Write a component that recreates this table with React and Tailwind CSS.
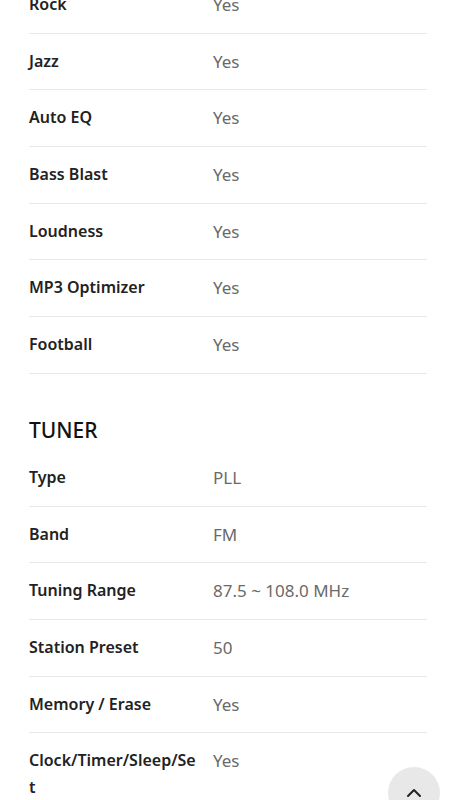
import { ChevronUp } from 'lucide-react'

const audio = [
  ['Rock', 'Yes'],
  ['Jazz', 'Yes'],
  ['Auto EQ', 'Yes'],
  ['Bass Blast', 'Yes'],
  ['Loudness', 'Yes'],
  ['MP3 Optimizer', 'Yes'],
  ['Football', 'Yes'],
]

const tuner = [
  ['Type', 'PLL'],
  ['Band', 'FM'],
  ['Tuning Range', '87.5 ~ 108.0 MHz'],
  ['Station Preset', '50'],
  ['Memory / Erase', 'Yes'],
  ['Clock/Timer/Sleep/Set', 'Yes'],
]

function Row({ label, value }) {
  return (
    <div className="flex border-b border-[#e8e8e8] pt-[14px] pb-[14.7px]">
      <div className="w-[184px] shrink-0 break-all pr-[14px] text-[16px] font-semibold leading-[27px] text-[#222]">{label}</div>
      <div className="flex-1 text-[17px] leading-[27px] text-[#6a6a6a]">{value}</div>
    </div>
  )
}

export default function App() {
  return (
    <div className="min-h-screen overflow-hidden bg-white font-['Noto_Sans',sans-serif]">
      <div className="-mt-[23px] pl-[29px] pr-[28px]">
        {audio.map(([l, v]) => (
          <Row key={l} label={l} value={v} />
        ))}
        <h2 className="mb-[4px] pt-[40px] text-[21px] font-medium leading-[32px] text-[#111]">TUNER</h2>
        <div>
          {tuner.map(([l, v]) => (
            <Row key={l} label={l} value={v} />
          ))}
        </div>
      </div>
      <button className="fixed right-[15px] top-[767px] flex h-[52px] w-[52px] items-start justify-center rounded-full bg-[#e8e8e8] pt-[14px] text-[#222]">
        <ChevronUp className="h-6 w-6" strokeWidth={2} />
      </button>
    </div>
  )
}
